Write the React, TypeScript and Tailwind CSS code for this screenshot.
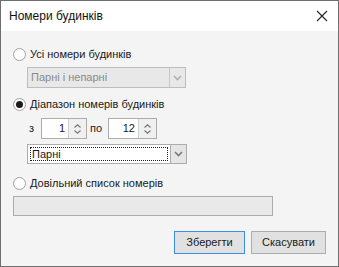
import React from 'react';

const Radio = ({ checked }: { checked?: boolean }) => (
  <span className="flex h-[13px] w-[13px] items-center justify-center rounded-full border border-[#a0a0a0] bg-white">
    {checked && <span className="h-[7px] w-[7px] rounded-full bg-[#1a1a1a]" />}
  </span>
);

const Chevron = ({ color }: { color: string }) => (
  <svg width="9" height="6" viewBox="0 0 9 6">
    <path d="M1 1 L4.5 4.5 L8 1" fill="none" stroke={color} strokeWidth="1.6" />
  </svg>
);

const Spin = ({ value, w }: { value: string; w: string }) => (
  <div className="flex h-[21px] items-stretch border border-[#acacac] bg-white">
    <div className={`flex items-center justify-end pr-[3px] text-[#1a1a1a] ${w}`}>{value}</div>
    <div className="flex w-[18px] flex-col items-center justify-center border-l border-[#d0d0d0] bg-[#f0f0f0]">
      <svg width="7" height="4" viewBox="0 0 7 4" className="mb-[2px]">
        <path d="M0.5 3.5 L3.5 0.8 L6.5 3.5" fill="none" stroke="#7a7a7a" strokeWidth="1.2" />
      </svg>
      <svg width="7" height="4" viewBox="0 0 7 4">
        <path d="M0.5 0.5 L3.5 3.2 L6.5 0.5" fill="none" stroke="#7a7a7a" strokeWidth="1.2" />
      </svg>
    </div>
  </div>
);

export default function App() {
  return (
    <div
      className="flex h-[267px] w-[339px] flex-col border border-[#6e6e6e] bg-[#f4f4f4] text-[11px] text-[#1a1a1a]"
      style={{ fontFamily: '"Liberation Sans", Arial, sans-serif' }}
    >
      {/* Title bar */}
      <div className="flex h-[30px] items-center justify-between bg-white pl-[8px] pr-[10px]">
        <span className="text-[12px] text-[#111]">Номери будинків</span>
        <svg width="12" height="12" viewBox="0 0 12 12">
          <path d="M1 1 L11 11 M11 1 L1 11" stroke="#222" strokeWidth="1.1" />
        </svg>
      </div>

      {/* Body */}
      <div className="flex flex-1 flex-col px-[12px] pt-[15px]">
        <label className="flex h-[16px] items-center gap-[4px]">
          <Radio />
          <span>Усі номери будинків</span>
        </label>
        <div className="ml-[14px] mt-[5px] flex h-[21px] w-[159px] border border-[#bdbdbd] bg-[#e8e8e8]">
          <span className="flex flex-1 items-center pl-[3px] text-[#8a8a8a]">Парні і непарні</span>
          <span className="flex w-[16px] items-center justify-center border-l border-[#c8c8c8]">
            <Chevron color="#b0b0b0" />
          </span>
        </div>

        <label className="mt-[8px] flex h-[16px] items-center gap-[4px]">
          <Radio checked />
          <span>Діапазон номерів будинків</span>
        </label>
        <div className="mt-[6px] flex items-center pl-[16px]">
          <span className="w-[12px]">з</span>
          <Spin value="1" w="w-[26px]" />
          <span className="ml-[3px] w-[18px]">по</span>
          <Spin value="12" w="w-[29px]" />
        </div>
        <div className="ml-[14px] mt-[5px] flex h-[20px] w-[160px] border border-[#acacac] bg-white">
          <span className="m-[2px] flex flex-1 items-center border border-dotted border-[#222] pl-[1px]">Парні</span>
          <span className="flex w-[16px] items-center justify-center border-l border-[#acacac] bg-[#e5e5e5]">
            <Chevron color="#7a7a7a" />
          </span>
        </div>

        <label className="mt-[11px] flex h-[16px] items-center gap-[4px]">
          <Radio />
          <span>Довільний список номерів</span>
        </label>
        <div className="mt-[5px] h-[20px] w-[260px] border border-[#acacac] bg-[#e9e9e9]" />

        <div className="mt-[15px] flex justify-end gap-[6px]">
          <button className="h-[23px] w-[71px] border border-[#3c8fe5] bg-[#e1e1e1] text-[#1a1a1a]">
            Зберегти
          </button>
          <button className="h-[23px] w-[75px] border border-[#adadad] bg-[#e1e1e1] text-[#1a1a1a]">
            Скасувати
          </button>
        </div>
      </div>
    </div>
  );
}
